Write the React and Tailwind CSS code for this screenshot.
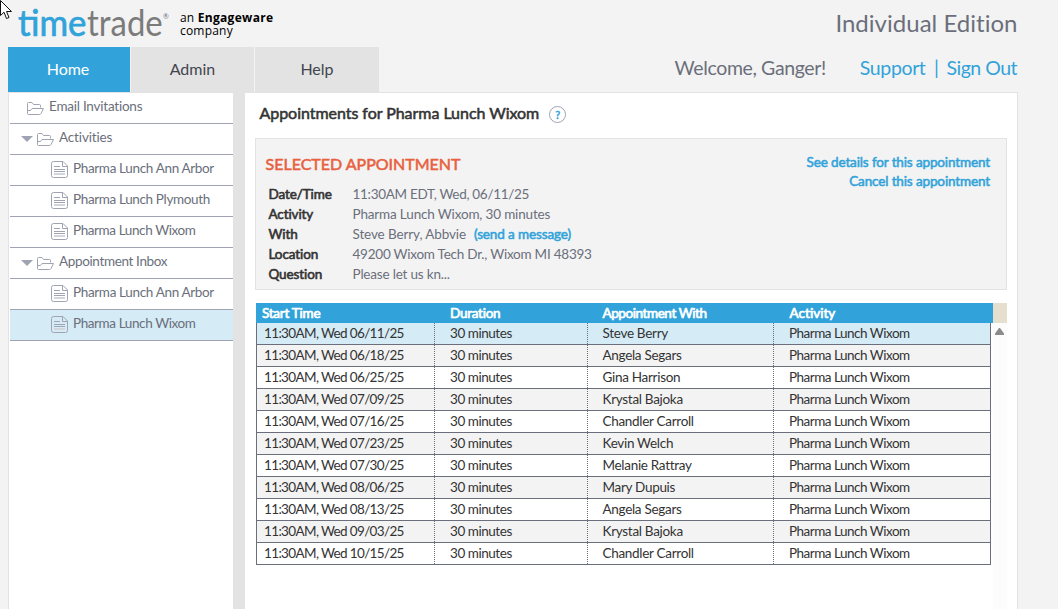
const SIDEBAR = [
  { label: 'Email Invitations', kind: 'top', tracking: 'tracking-[-0.23px]' },
  { label: 'Activities', kind: 'folder', tracking: 'tracking-[-0.15px]' },
  { label: 'Pharma Lunch Ann Arbor', kind: 'doc', tracking: 'tracking-[-0.34px]' },
  { label: 'Pharma Lunch Plymouth', kind: 'doc', tracking: 'tracking-[-0.36px]' },
  { label: 'Pharma Lunch Wixom', kind: 'doc', tracking: 'tracking-[-0.4px]' },
  { label: 'Appointment Inbox', kind: 'folder', tracking: 'tracking-[-0.36px]' },
  { label: 'Pharma Lunch Ann Arbor', kind: 'doc', tracking: 'tracking-[-0.34px]' },
  { label: 'Pharma Lunch Wixom', kind: 'doc', selected: true, tracking: 'tracking-[-0.4px]' },
];

const ROWS = [
  ['11:30AM, Wed 06/11/25', 'Steve Berry'],
  ['11:30AM, Wed 06/18/25', 'Angela Segars'],
  ['11:30AM, Wed 06/25/25', 'Gina Harrison'],
  ['11:30AM, Wed 07/09/25', 'Krystal Bajoka'],
  ['11:30AM, Wed 07/16/25', 'Chandler Carroll'],
  ['11:30AM, Wed 07/23/25', 'Kevin Welch'],
  ['11:30AM, Wed 07/30/25', 'Melanie Rattray'],
  ['11:30AM, Wed 08/06/25', 'Mary Dupuis'],
  ['11:30AM, Wed 08/13/25', 'Angela Segars'],
  ['11:30AM, Wed 09/03/25', 'Krystal Bajoka'],
  ['11:30AM, Wed 10/15/25', 'Chandler Carroll'],
];

const DETAILS = [
  ['Date/Time', '11:30AM EDT, Wed, 06/11/25', 'tracking-[-0.3px]'],
  ['Activity', 'Pharma Lunch Wixom, 30 minutes', 'tracking-[-0.16px]'],
  ['With', 'Steve Berry, Abbvie', 'tracking-[-0.12px]'],
  ['Location', '49200 Wixom Tech Dr., Wixom MI 48393', 'tracking-[-0.23px]'],
  ['Question', 'Please let us kn...', 'tracking-[-0.19px]'],
];

function FolderIcon() {
  return (
    <svg className="h-[13px] w-[17px] shrink-0" viewBox="0 0 17 13" fill="none" stroke="#a0a4b2" strokeLinejoin="round">
      <path d="M.5 11.500V1.500Q.5 .5 1.500 .5H5L6.500 2.500H12.500Q13.500 2.500 13.500 3.500V5.500" />
      <path d="M.5 11.500Q.5 12.500 1.500 12.500H12.500Q13.500 12.500 14 11.500L16.500 6.500H5L3.500 8.500H.5" />
    </svg>
  );
}

function DocIcon() {
  return (
    <svg className="h-[17px] w-[17px] shrink-0" viewBox="0 0 17 17" fill="none" stroke="#a0a4b2">
      <path d="M2.500 .5H12L16.500 5V14.500Q16.500 16.500 14.500 16.500H2.500Q.5 16.500 .5 14.500V2.500Q.5 .5 2.500 .5Z" />
      <path d="M11.500 .5V5.500H16.500M3 5.500H9M3 8.500H14M3 10.500H14" />
      <path d="M3 13H14" stroke="#d3d5dd" strokeWidth="2" />
    </svg>
  );
}

function SidebarItem({ label, kind, selected, tracking }) {
  const indent = kind === 'doc' ? 'pl-[41px]' : kind === 'folder' ? 'pl-[11px]' : 'pl-[17px]';
  return (
    <li className={`flex h-[31px] items-center border-b border-[#a0a4b2] pb-px ${indent} ${selected ? 'bg-[#d5ebf6]' : ''}`}>
      {kind === 'folder' && (
        <svg className="mr-[4px] h-[6px] w-[12px] shrink-0" viewBox="0 0 12 6">
          <path d="M0 0H12L6 6Z" fill="#a0a4b2" />
        </svg>
      )}
      {kind === 'doc' ? <DocIcon /> : <span className="pt-[2px]"><FolderIcon /></span>}
      <span className={`mb-[4px] ml-[5px] whitespace-nowrap ${tracking}`}>{label}</span>
    </li>
  );
}

export default function App() {
  return (
    <div className="relative flex h-[609px] w-[1058px] flex-col overflow-hidden bg-[#f3f3f3] font-['Lato',sans-serif] text-[13.5px] leading-[20px] text-[#6b6f7b]">
      <svg className="absolute left-0 top-0 h-[20px] w-[13px]" viewBox="0 0 13 20">
        <path d="M.5 .5V15.500L4 12.200L6.500 18.500L9 17.500L6.500 11.500H11.500Z" fill="#fff" stroke="#111" />
      </svg>

      <header className="flex h-[47px] justify-between pl-[18px] pr-[40.5px]">
        <div className="flex">
          <div className="flex text-[37px] leading-[43px]">
            <span className="w-[69px]">
              <span className="inline-block origin-left scale-x-[0.94] text-[#31a3da] [-webkit-text-stroke:0.7px]">time</span>
            </span>
            <span className="w-[76px]">
              <span className="inline-block origin-left scale-x-[0.89] text-[#7b7b7b]">trade</span>
            </span>
          </div>
          <span className="mt-[12px] w-[6px] text-[7px] leading-[8px]">®</span>
          <div className="ml-[11px] mt-[11px] font-['Open_Sans',sans-serif] text-[12px] leading-[13px] tracking-[0.2px] text-black">
            <div>an <b className="tracking-[0.3px]">Engageware</b></div>
            <div>company</div>
          </div>
        </div>
        <div className="mt-[8px] text-[24px] leading-[30px] tracking-[0.02px]">Individual Edition</div>
      </header>

      <div className="flex h-[45px] justify-between pl-[8px] pr-[41px]">
        <nav className="flex gap-px text-[16px] leading-[44px]">
          <a className="w-[122px] bg-[#31a3da] pr-[2px] text-center text-white">Home</a>
          <a className="w-[123px] bg-[#e3e3e3] text-center text-[#42454e]">Admin</a>
          <a className="w-[124px] bg-[#e3e3e3] text-center text-[#42454e]">Help</a>
        </nav>
        <div className="flex text-[19.5px] leading-[41px] tracking-[-0.38px]">
          <span>Welcome, Ganger!</span>
          <span className="ml-[34px] text-[#31a3da]">Support</span>
          <span className="ml-[8.5px] mr-[8px] text-[#31a3da]">|</span>
          <span className="text-[#31a3da] tracking-[-0.5px]">Sign Out</span>
        </div>
      </div>

      <div className="ml-[8px] flex h-[517px] w-[1010px] border-x border-t border-[#e3e3e3] bg-white">
        <ul className="w-[224px] pl-px">
          {SIDEBAR.map((item, i) => (
            <SidebarItem key={i} {...item} />
          ))}
        </ul>
        <div className="w-[12px] bg-[#e3e3e3]" />
        <main className="flex flex-1 flex-col pl-[10px] pr-[10px]">
          <div className="flex h-[45px] items-start pl-[4.5px]">
            <h1 className="mt-[10px] text-[16px] tracking-[-0.04px] text-[#333] [-webkit-text-stroke:0.55px]">Appointments for Pharma Lunch Wixom</h1>
            <span className="ml-[10px] mt-[13px] h-[17px] w-[17px] rounded-full border border-[#a0a4b2] text-center text-[11px] leading-[15px] text-[#31a3da] [-webkit-text-stroke:0.5px]">?</span>
          </div>

          <section className="flex h-[152px] justify-between border border-[#e3e3e3] bg-[#f3f3f3] pl-[9.5px] pr-[16px]">
            <div>
              <h2 className="mt-[15px] text-[16px] text-[#e9603e] [-webkit-text-stroke:0.55px]">SELECTED APPOINTMENT</h2>
              <dl className="mt-[10px] pl-[3px]">
                {DETAILS.map(([term, value, tracking]) => (
                  <div key={term} className="flex h-[20px]">
                    <dt className="w-[84px] tracking-[-0.1px] text-[#333] [-webkit-text-stroke:0.6px]">{term}</dt>
                    <dd className={tracking}>
                      {value}
                      {term === 'With' && <a className="ml-[8px] text-[#31a3da] [-webkit-text-stroke:0.55px]">(send a message)</a>}
                    </dd>
                  </div>
                ))}
              </dl>
            </div>
            <div className="mt-[14px] text-right leading-[19px] tracking-[-0.13px] text-[#31a3da] [-webkit-text-stroke:0.55px]">
              <div>See details for this appointment</div>
              <div>Cancel this appointment</div>
            </div>
          </section>

          <div className="ml-px mt-[13px] flex h-[20px] text-white">
            <div className="grid w-[737px] grid-cols-[188px_152px_187px_1fr] bg-[#31a3da] pl-[6px] [-webkit-text-stroke:0.7px]">
              <span className="tracking-[-0.25px]">Start Time</span>
              <span className="tracking-[-0.25px]">Duration</span>
              <span className="pl-[0.5px] tracking-[-0.42px]">Appointment With</span>
              <span className="pl-[0.5px]">Activity</span>
            </div>
            <div className="w-[14px] bg-[#e6dfcd]" />
          </div>
          <div className="ml-px flex flex-1">
            <div className="w-[735px] text-[#333]">
              {ROWS.map(([time, person], i) => (
                <div
                  key={time}
                  className={`grid h-[22px] grid-cols-[178px_153px_186px_1fr] border-x border-b border-[#6b6f7b] leading-[20px] ${
                    i === 0 ? 'bg-[#d5ebf6]' : i % 2 ? 'bg-[#f3f3f3]' : 'bg-white'
                  }`}
                >
                  <span className="border-r border-dotted border-[#6b6f7b] pl-[7px] tracking-[-0.64px]">{time}</span>
                  <span className="border-r border-dotted border-[#6b6f7b] pl-[15px] tracking-[-0.45px]">30 minutes</span>
                  <span className="border-r border-dotted border-[#6b6f7b] pl-[14.5px] tracking-[-0.3px]">{person}</span>
                  <span className="pl-[15px] tracking-[-0.5px]">Pharma Lunch Wixom</span>
                </div>
              ))}
            </div>
            <div className="ml-[2px] w-[14px] bg-[#fcfcfc] pl-[2px] pt-[5px]">
              <svg className="h-[7px] w-[9px]" viewBox="0 0 9 7">
                <path d="M4 0H5L9 5.500V7H0V5.500Z" fill="#8b8b8b" />
              </svg>
            </div>
          </div>
        </main>
      </div>
    </div>
  );
}
